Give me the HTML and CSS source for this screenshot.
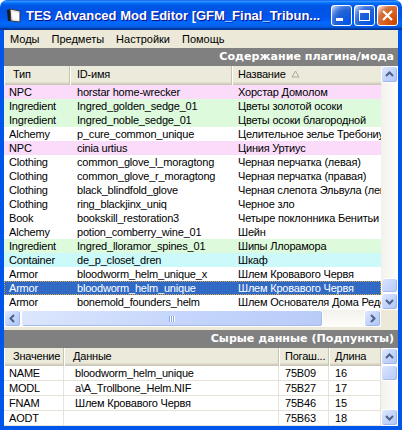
FILE: index.html
```html
<!DOCTYPE html>
<html>
<head>
<meta charset="utf-8">
<link rel="stylesheet" href="styles.css">
</head>
<body>
<div class="window">
  <div class="titlebar">
    <svg class="app-icon" viewBox="0 0 16 16">
      <polygon points="1,3 4,2 5,14 2,14" fill="#1a1a1a"/>
      <polygon points="4,2 14,4 14,15 5,14" fill="#e8e8e8" stroke="#3a3a3a" stroke-width="1"/>
      <polygon points="6,5 13,6 13,13 7,12" fill="#ffffff"/>
    </svg>
    <span class="title">TES Advanced Mod Editor [GFM_Final_Tribun...</span>
    <div class="caption-btns">
      <span class="cbtn blue"><i class="g-min"></i></span>
      <span class="cbtn blue"><i class="g-max"></i></span>
      <span class="cbtn red"><svg viewBox="0 0 19 19"><path d="M5 5 L14 14 M14 5 L5 14" stroke="#fff" stroke-width="2.2"/></svg></span>
    </div>
  </div>
  <div class="client">
    <div class="menubar"><span>Моды</span><span>Предметы</span><span>Настройки</span><span>Помощь</span></div>
    <div class="panelbar">Содержание плагина/мода</div>
    <div class="lv lv-top">
      <div class="lv-body">
        <div class="hdr">
          <span class="c1">Тип</span><span class="c2">ID-имя</span><span class="c3">Название <svg class="sort" viewBox="0 0 9 8"><polygon points="4.5,1 8,7 1,7" fill="none" stroke="#aca899"/></svg></span>
        </div>
        <div class="row npc"><span class="c1">NPC</span><span class="c2">horstar home-wrecker</span><span class="c3">Хорстар Домолом</span></div>
        <div class="row ing"><span class="c1">Ingredient</span><span class="c2">Ingred_golden_sedge_01</span><span class="c3">Цветы золотой осоки</span></div>
        <div class="row ing"><span class="c1">Ingredient</span><span class="c2">Ingred_noble_sedge_01</span><span class="c3">Цветы осоки благородной</span></div>
        <div class="row"><span class="c1">Alchemy</span><span class="c2">p_cure_common_unique</span><span class="c3">Целительное зелье Требониуса</span></div>
        <div class="row npc"><span class="c1">NPC</span><span class="c2">cinia urtius</span><span class="c3">Циния Уртиус</span></div>
        <div class="row"><span class="c1">Clothing</span><span class="c2">common_glove_l_moragtong</span><span class="c3">Черная перчатка (левая)</span></div>
        <div class="row"><span class="c1">Clothing</span><span class="c2">common_glove_r_moragtong</span><span class="c3">Черная перчатка (правая)</span></div>
        <div class="row"><span class="c1">Clothing</span><span class="c2">black_blindfold_glove</span><span class="c3">Черная слепота Эльвула (левая)</span></div>
        <div class="row"><span class="c1">Clothing</span><span class="c2">ring_blackjinx_uniq</span><span class="c3">Черное зло</span></div>
        <div class="row"><span class="c1">Book</span><span class="c2">bookskill_restoration3</span><span class="c3">Четыре поклонника Бенитьи</span></div>
        <div class="row"><span class="c1">Alchemy</span><span class="c2">potion_comberry_wine_01</span><span class="c3">Шейн</span></div>
        <div class="row ing"><span class="c1">Ingredient</span><span class="c2">Ingred_lloramor_spines_01</span><span class="c3">Шипы Ллорамора</span></div>
        <div class="row cont"><span class="c1">Container</span><span class="c2">de_p_closet_dren</span><span class="c3">Шкаф</span></div>
        <div class="row"><span class="c1">Armor</span><span class="c2">bloodworm_helm_unique_x</span><span class="c3">Шлем Кровавого Червя</span></div>
        <div class="row sel"><span class="c1">Armor</span><span class="c2">bloodworm_helm_unique</span><span class="c3">Шлем Кровавого Червя</span></div>
        <div class="row"><span class="c1">Armor</span><span class="c2">bonemold_founders_helm</span><span class="c3">Шлем Основателя Дома Редоран</span></div>
      </div>
      <div class="vscroll">
        <span class="sbtn"><svg viewBox="0 0 15 15"><polyline points="4,9 7.5,5.5 11,9" fill="none" stroke="#4d6185" stroke-width="2"/></svg></span>
        <span class="track grow"></span>
        <span class="thumb vthumb"></span>
        <span class="sbtn"><svg viewBox="0 0 15 15"><polyline points="4,6 7.5,9.5 11,6" fill="none" stroke="#4d6185" stroke-width="2"/></svg></span>
      </div>
      <div class="hscroll">
        <span class="sbtn"><svg viewBox="0 0 15 15"><polyline points="9,4 5.5,7.5 9,11" fill="none" stroke="#4d6185" stroke-width="2"/></svg></span>
        <span class="thumb hthumb"><svg class="grip" viewBox="0 0 8 8"><path d="M1.5 1v6M3.5 1v6M5.5 1v6" stroke="#8aa6e6" stroke-width="1"/><path d="M2.5 1v6M4.5 1v6M6.5 1v6" stroke="#fff" stroke-width="1"/></svg></span>
        <span class="track grow"></span>
        <span class="sbtn"><svg viewBox="0 0 15 15"><polyline points="6,4 9.5,7.5 6,11" fill="none" stroke="#4d6185" stroke-width="2"/></svg></span>
      </div>
      <div class="corner"></div>
    </div>
    <div class="panelbar second">Сырые данные (Подпункты)</div>
    <div class="lv lv-bottom">
      <div class="lv-body">
        <div class="hdr">
          <span class="d1">Значение</span><span class="d2">Данные</span><span class="d3">Погаш...</span><span class="d4">Длина</span>
        </div>
        <div class="row grid"><span class="d1">NAME</span><span class="d2">bloodworm_helm_unique</span><span class="d3">75B09</span><span class="d4">16</span></div>
        <div class="row grid"><span class="d1">MODL</span><span class="d2">a\A_Trollbone_Helm.NIF</span><span class="d3">75B27</span><span class="d4">17</span></div>
        <div class="row grid"><span class="d1">FNAM</span><span class="d2">Шлем Кровавого Червя</span><span class="d3">75B46</span><span class="d4">15</span></div>
        <div class="row grid"><span class="d1">AODT</span><span class="d2"></span><span class="d3">75B63</span><span class="d4">18</span></div>
      </div>
      <div class="vscroll">
        <span class="sbtn"><svg viewBox="0 0 15 15"><polyline points="4,9 7.5,5.5 11,9" fill="none" stroke="#4d6185" stroke-width="2"/></svg></span>
        <span class="thumb vthumb2"></span>
        <span class="track grow"></span>
        <span class="sbtn"><svg viewBox="0 0 15 15"><polyline points="4,6 7.5,9.5 11,6" fill="none" stroke="#4d6185" stroke-width="2"/></svg></span>
      </div>
    </div>
  </div>
</div>
</body>
</html>
```
FILE: styles.css
```css
html, body { margin: 0; padding: 0; background: #ffffff; }

.window {
  width: 402px;
  height: 430px;
  display: flex;
  flex-direction: column;
  overflow: hidden;
  border-radius: 7px 7px 0 0;
  font-family: "Liberation Sans", Arial, sans-serif;
  font-size: 11px;
  letter-spacing: -0.2px;
  color: #000;
}

.titlebar {
  height: 30px;
  flex: none;
  display: flex;
  align-items: center;
  padding: 0 4px 0 6px;
  box-sizing: border-box;
  background: linear-gradient(to bottom, #0058ee 0%, #3a93ff 4%, #288eff 6%, #127dff 8%, #036ffc 10%, #0262ee 14%, #0057e5 20%, #0054e3 24%, #0055eb 56%, #005bf5 66%, #026afe 76%, #0062ef 86%, #0052d6 92%, #0040ab 94%, #003092 100%);
}

.app-icon { width: 16px; height: 16px; flex: none; margin-right: 4px; }

.title {
  flex: 1;
  color: #fff;
  font: bold 13px "Liberation Sans", sans-serif;
  letter-spacing: 0;
  text-shadow: 1px 1px #0f1089;
  white-space: nowrap;
  overflow: hidden;
}

.caption-btns { display: flex; gap: 2px; }

.cbtn {
  width: 21px;
  height: 21px;
  box-sizing: border-box;
  border: 1px solid #fff;
  border-radius: 3px;
  position: relative;
  display: block;
}
.cbtn.blue { background: radial-gradient(circle at 90% 90%, #0054e9 0%, #2263d5 55%, #4479e4 70%, #a3bbec 90%, #fff 100%); }
.cbtn.red { background: radial-gradient(circle at 90% 90%, #cc4600 0%, #dc6527 55%, #cd7546 70%, #ffccb2 90%, #fff 100%); }
.cbtn svg { width: 19px; height: 19px; display: block; }
.g-min { position: absolute; left: 4px; bottom: 4px; width: 7px; height: 3px; background: #fff; }
.g-max { position: absolute; left: 4px; top: 4px; width: 11px; height: 11px; box-sizing: border-box; border: 1px solid #fff; border-top-width: 3px; }

.client {
  flex: 1;
  min-height: 0;
  display: flex;
  flex-direction: column;
  background: #ece9d8;
  border: 4px solid #0055ea;
  border-top: 0;
}

.menubar {
  height: 18px;
  flex: none;
  display: flex;
  align-items: center;
  padding-left: 0;
  font-size: 11px;
  letter-spacing: 0;
}
.menubar span { padding: 0 6px; }

.panelbar {
  height: 18px;
  flex: none;
  background: #808080;
  color: #fff;
  font: bold 11.1px "DejaVu Sans", sans-serif;
  letter-spacing: 0;
  text-align: right;
  line-height: 18px;
  padding-right: 4px;
  white-space: nowrap;
}
.panelbar.second { margin-top: 3px; }

.lv {
  display: grid;
  grid-template-columns: 377px 17px;
  background: #fff;
  flex: none;
}
.lv-top { height: 261px; grid-template-rows: 244px 17px; }
.lv-bottom { height: 78px; grid-template-rows: 78px; }

.lv-body { overflow: hidden; background: #fff; }

.hdr {
  display: flex;
  height: 19px;
  background: #ebeadb;
  box-shadow: inset 0 -1px #cbc7b8, inset 0 -2px #d6d2c2, inset 0 -3px #e2decd;
  white-space: nowrap;
}
.lv-bottom .hdr { height: 18px; }
.hdr span {
  flex: none;
  box-sizing: border-box;
  line-height: 17px;
  border-right: 1px solid #c7c5b2;
  box-shadow: inset 1px 0 #fff;
  overflow: hidden;
}

.row {
  display: flex;
  height: 14px;
  line-height: 14px;
  white-space: nowrap;
}
.row span { flex: none; box-sizing: border-box; overflow: hidden; }

.c1 { width: 66px; padding-left: 5px; }
.c2 { width: 162px; padding-left: 7px; }
.c3 { width: 210px; padding-left: 6px; }
.hdr .c1 { padding-left: 9px; }
.hdr .c3 { border-right: 0; }
.sort { width: 9px; height: 8px; margin-left: 3px; vertical-align: 0; }

.npc { background: #fadcfa; }
.ing { background: #ddfadd; }
.cont { background: #ccfafa; }
.sel { background: #316ac5; color: #fff; outline: 1px dotted #d8a642; outline-offset: -1px; }

.d1 { width: 60px; padding-left: 5px; }
.d2 { width: 215px; padding-left: 11px; }
.d3 { width: 50px; padding-left: 6px; }
.d4 { width: 52px; padding-left: 6px; }
.hdr .d1 { padding-left: 9px; }
.hdr .d2 { padding-left: 9px; }

.row.grid { height: 15px; line-height: 14px; }
.row.grid span { border-right: 1px solid #e6e4d9; border-bottom: 1px solid #e6e4d9; }

.vscroll {
  display: flex;
  flex-direction: column;
  background: linear-gradient(to right, #f3f1ec, #fefefb);
}
.hscroll {
  display: flex;
  background: linear-gradient(to bottom, #f3f1ec, #fefefb);
}
.corner { background: #ece9d8; }

.sbtn {
  width: 17px;
  height: 17px;
  flex: none;
  box-sizing: border-box;
  border: 1px solid #fff;
  border-radius: 3px;
  background: linear-gradient(135deg, #dfe8fd 0%, #c3d4fc 50%, #b1c6f6 100%);
  box-shadow: inset -1px -1px #a0b5e8;
  display: flex;
  align-items: center;
  justify-content: center;
}
.sbtn svg { width: 15px; height: 15px; display: block; }

.thumb {
  flex: none;
  box-sizing: border-box;
  border: 1px solid #fff;
  border-radius: 3px;
  background: linear-gradient(135deg, #dde7fd 0%, #c6d6fc 50%, #b8cbf8 100%);
  box-shadow: inset -1px -1px #a7bbea;
  display: flex;
  align-items: center;
  justify-content: center;
}
.hthumb { width: 302px; height: 17px; }
.grip { width: 8px; height: 8px; }
.vthumb { height: 15px; }
.vthumb2 { height: 16px; }
.grow { flex: 1; }
```
